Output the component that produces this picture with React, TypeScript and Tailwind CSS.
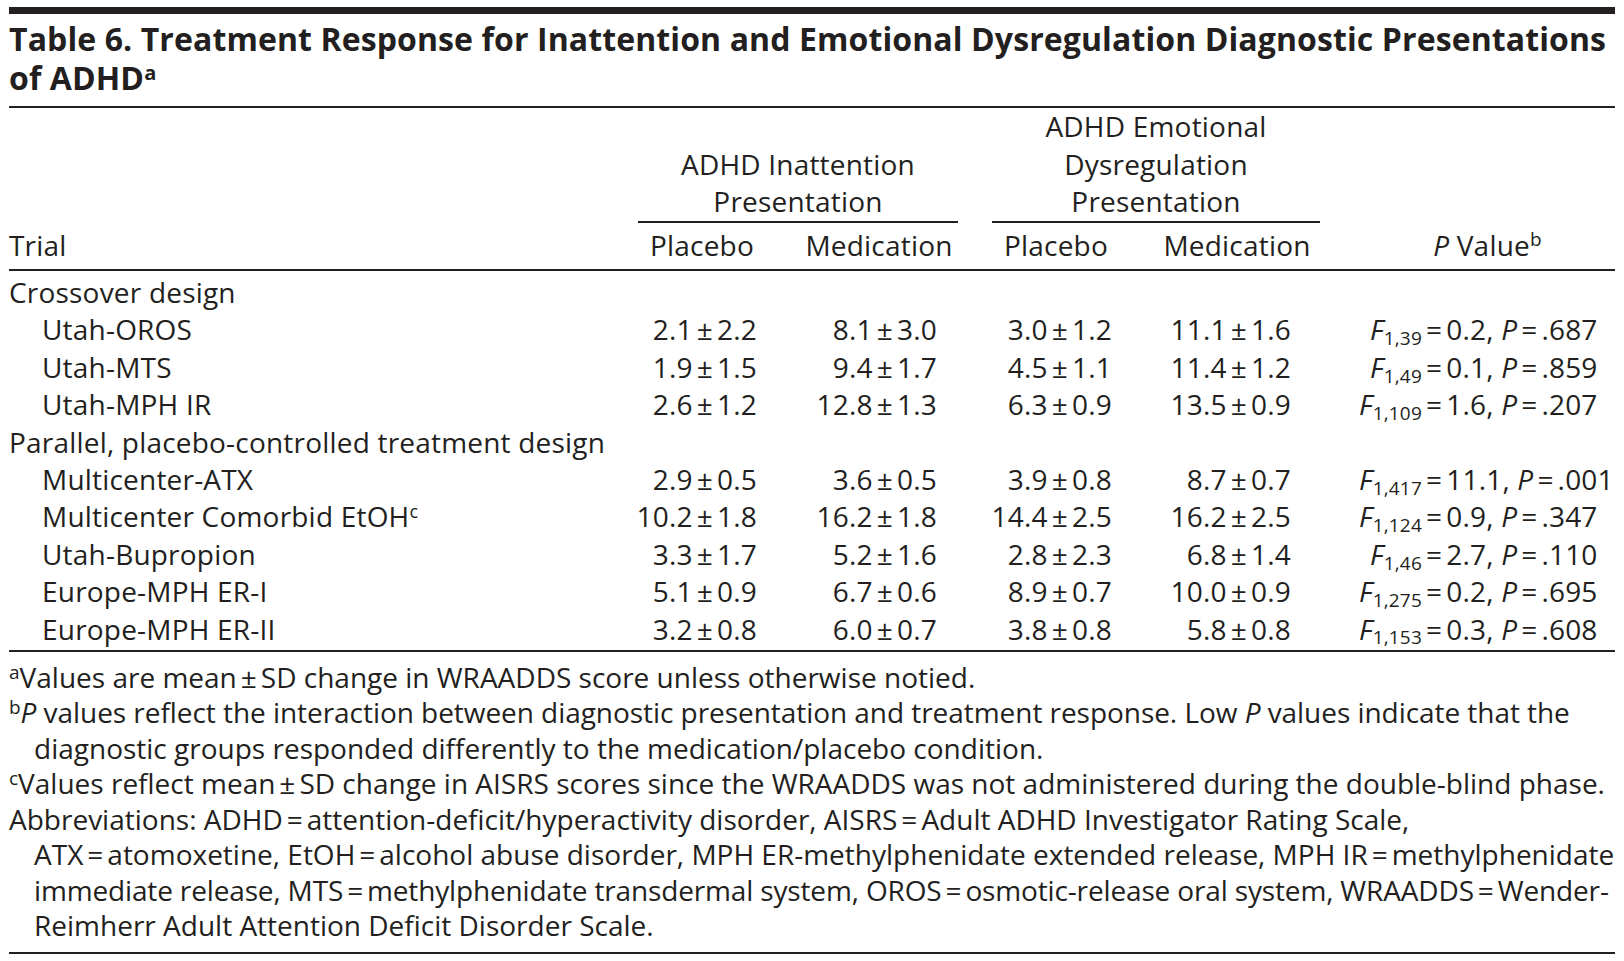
import React from "react";

type Row =
  | { kind: "group"; label: string }
  | { kind: "data"; label: React.ReactNode; v: string[]; df: string; f: string; p: string };

const rows: Row[] = [
  { kind: "group", label: "Crossover design" },
  { kind: "data", label: "Utah-OROS", v: ["2.1±2.2", "8.1±3.0", "3.0±1.2", "11.1±1.6"], df: "1,39", f: "0.2", p: ".687" },
  { kind: "data", label: "Utah-MTS", v: ["1.9±1.5", "9.4±1.7", "4.5±1.1", "11.4±1.2"], df: "1,49", f: "0.1", p: ".859" },
  { kind: "data", label: "Utah-MPH IR", v: ["2.6±1.2", "12.8±1.3", "6.3±0.9", "13.5±0.9"], df: "1,109", f: "1.6", p: ".207" },
  { kind: "group", label: "Parallel, placebo-controlled treatment design" },
  { kind: "data", label: "Multicenter-ATX", v: ["2.9±0.5", "3.6±0.5", "3.9±0.8", "8.7±0.7"], df: "1,417", f: "11.1", p: ".001" },
  {
    kind: "data",
    label: (
      <>
        Multicenter Comorbid EtOH<sup className="text-[18px]">c</sup>
      </>
    ),
    v: ["10.2±1.8", "16.2±1.8", "14.4±2.5", "16.2±2.5"],
    df: "1,124",
    f: "0.9",
    p: ".347",
  },
  { kind: "data", label: "Utah-Bupropion", v: ["3.3±1.7", "5.2±1.6", "2.8±2.3", "6.8±1.4"], df: "1,46", f: "2.7", p: ".110" },
  { kind: "data", label: "Europe-MPH ER-I", v: ["5.1±0.9", "6.7±0.6", "8.9±0.7", "10.0±0.9"], df: "1,275", f: "0.2", p: ".695" },
  { kind: "data", label: "Europe-MPH ER-II", v: ["3.2±0.8", "6.0±0.7", "3.8±0.8", "5.8±0.8"], df: "1,153", f: "0.3", p: ".608" },
];

// right padding per numeric column so values line up with the reference
const valuePad = ["pr-[33px]", "pr-[31px]", "pr-[32px]", "pr-[39px]"];

function PlusMinus({ value }: { value: string }) {
  const [a, b] = value.split("±");
  return (
    <>
      {a}
      <span className="mx-[4px]">±</span>
      {b}
    </>
  );
}

function Eq() {
  return <span className="mx-[4px]">=</span>;
}

export default function App() {
  return (
    <div
      className="w-[1624px] h-[961px] bg-white px-[9px] pt-[7px] text-[#231f20]"
      style={{ fontFamily: '"Open Sans", "Noto Sans", sans-serif' }}
    >
      {/* Title */}
      <div className="h-[7px] bg-[#231f20]" />
      <h1 className="whitespace-nowrap pt-[5px] text-[32px] font-bold leading-[39px] tracking-[0.1px]">
        Table 6. Treatment Response for Inattention and Emotional Dysregulation Diagnostic Presentations
        <br />
        of ADHD<sup className="text-[20px]">a</sup>
      </h1>
      <div className="mt-[9px] h-[2px] bg-[#231f20]" />

      <div className="text-[28px]">
        {/* Header */}
        <div className="grid grid-cols-[605px_176px_178px_176px_186px_1fr] items-end leading-[37.5px] tracking-[0.2px]">
          <div />
          <div className="col-span-2 mb-[1px] ml-[24px] mr-[10px] border-b-2 border-[#231f20] text-center">
            ADHD Inattention
            <br />
            Presentation
          </div>
          <div className="col-span-2 mb-[1px] ml-[24px] mr-[10px] border-b-2 border-[#231f20] text-center">
            ADHD Emotional
            <br />
            Dysregulation
            <br />
            Presentation
          </div>
          <div />
        </div>
        <div className="grid grid-cols-[605px_176px_178px_176px_186px_1fr] border-b-2 border-[#231f20] pb-[5px] pt-[3px] leading-[37.5px] tracking-[0.2px]">
          <div>Trial</div>
          <div className="text-center">Placebo</div>
          <div className="text-center">Medication</div>
          <div className="text-center">Placebo</div>
          <div className="text-center">Medication</div>
          <div className="pl-[30px] text-center">
            <i>P</i> Value<sup className="text-[19px]">b</sup>
          </div>
        </div>

        {/* Body */}
        <div className="grid grid-cols-[605px_176px_178px_176px_186px_1fr] border-b-2 border-[#231f20] pb-[2px] pt-[3px] leading-[37.4px] tracking-[0.2px]">
          {rows.map((r, i) =>
            r.kind === "group" ? (
              <div key={i} className="col-span-6">
                {r.label}
              </div>
            ) : (
              <React.Fragment key={i}>
                <div className="pl-[33px]">{r.label}</div>
                {r.v.map((v, j) => (
                  <div key={j} className={`text-right ${valuePad[j]}`}>
                    <PlusMinus value={v} />
                  </div>
                ))}
                <div className="flex whitespace-nowrap">
                  <span className="w-[92px] text-right">
                    <i>F</i>
                    <sub className="text-[19px]">{r.df}</sub>
                  </span>
                  <span>
                    <Eq />
                    {r.f}, <i>P</i>
                    <Eq />
                    {r.p}
                  </span>
                </div>
              </React.Fragment>
            )
          )}
        </div>

        {/* Footnotes */}
        <div className="whitespace-nowrap border-b-2 border-[#231f20] pb-[9px] pt-[8px] leading-[35.4px]">
          <div>
            <sup className="text-[19px]">a</sup>Values are mean<span className="mx-[4px]">±</span>SD change in WRAADDS
            score unless otherwise notied.
          </div>
          <div className="tracking-[-0.05px]">
            <sup className="text-[19px]">b</sup>
            <i>P</i> values reflect the interaction between diagnostic presentation and treatment response. Low <i>P</i> values
            indicate that the
          </div>
          <div className="pl-[25px]">diagnostic groups responded differently to the medication/placebo condition.</div>
          <div>
            <sup className="text-[19px]">c</sup>Values reflect mean<span className="mx-[4px]">±</span>SD change in AISRS
            scores since the WRAADDS was not administered during the double-blind phase.
          </div>
          <div>
            Abbreviations: ADHD<Eq />attention-deficit/hyperactivity disorder, AISRS<Eq />Adult ADHD Investigator Rating
            Scale,
          </div>
          <div className="pl-[25px]">
            ATX<Eq />atomoxetine, EtOH<Eq />alcohol abuse disorder, MPH ER-methylphenidate extended release, MPH IR<Eq />
            methylphenidate
          </div>
          <div className="pl-[25px] tracking-[-0.15px]">
            immediate release, MTS<Eq />methylphenidate transdermal system, OROS<Eq />osmotic-release oral system, WRAADDS
            <Eq />
            Wender-
          </div>
          <div className="pl-[25px]">Reimherr Adult Attention Deficit Disorder Scale.</div>
        </div>
      </div>
    </div>
  );
}
